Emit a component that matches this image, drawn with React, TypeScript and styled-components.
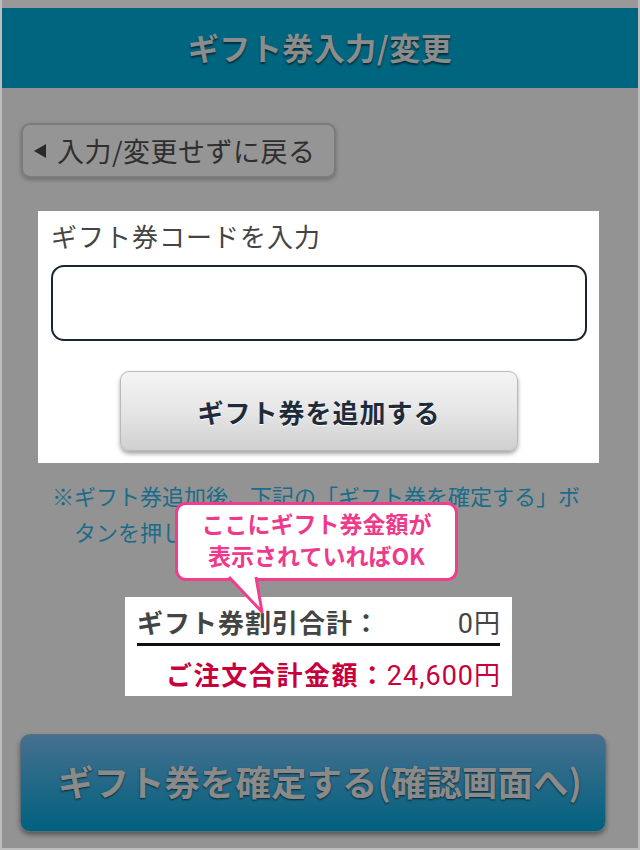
import React from "react";
import styled, { createGlobalStyle } from "styled-components";

const GlobalStyle = createGlobalStyle`
  html, body {
    margin: 0;
    padding: 0;
    background: #bdbdbd;
  }
  body {
    font-family: "Noto Sans CJK JP", "Noto Sans", sans-serif;
  }
  * { box-sizing: border-box; }
`;

const Frame = styled.div`
  width: 636px;
  height: 848px;
  margin: 0 2px;
  background: #939393;
  display: flex;
  flex-direction: column;
  overflow: hidden;
`;

const TopStrip = styled.div`
  height: 8px;
  background: #999999;
  flex: none;
`;

const Header = styled.header`
  height: 80px;
  flex: none;
  background: #00657f;
  display: flex;
  align-items: center;
  justify-content: center;
  padding-bottom: 4px;
`;

const Title = styled.h1`
  margin: 0;
  font-size: 31px;
  font-weight: 700;
  color: #8c8c8c;
  text-shadow: 0 2px 2px rgba(0, 0, 0, 0.55);
  letter-spacing: 0.5px;
`;

const BackButton = styled.button`
  align-self: flex-start;
  margin: 35px 0 0 19px;
  height: 55px;
  padding: 0 18px 0 11px;
  display: flex;
  align-items: center;
  gap: 11px;
  background: #959595;
  border: 2px solid #7b7b7b;
  border-radius: 9px;
  box-shadow: 0 2px 4px rgba(0, 0, 0, 0.25);
  font-family: inherit;
  font-size: 27px;
  letter-spacing: 0.5px;
  color: #2f2f2f;
  cursor: pointer;
`;

const Arrow = styled.span`
  width: 0;
  height: 0;
  border-top: 7px solid transparent;
  border-bottom: 7px solid transparent;
  border-right: 12px solid #2a2a2a;
`;

const InputPanel = styled.section`
  margin: 33px 0 0 36px;
  width: 561px;
  background: #ffffff;
  padding: 6px 12px 12px 13px;
  display: flex;
  flex-direction: column;
`;

const Label = styled.label`
  font-size: 26px;
  line-height: 38px;
  letter-spacing: 1px;
  color: #444444;
`;

const CodeInput = styled.input`
  margin-top: 10px;
  height: 76px;
  width: 100%;
  border: 2px solid #1b2533;
  border-radius: 13px;
  background: #fff;
  font-size: 26px;
  padding: 0 14px;
  outline: none;
`;

const AddButton = styled.button`
  align-self: center;
  margin-top: 30px;
  width: 398px;
  height: 80px;
  border: 1px solid #b9b9b9;
  border-radius: 9px;
  background: linear-gradient(#f4f4f4, #e6e6e6 50%, #d0d0d0);
  box-shadow: 0 3px 4px rgba(0, 0, 0, 0.35);
  font-family: inherit;
  font-size: 26px;
  font-weight: 700;
  letter-spacing: 1px;
  color: #1e2b3b;
  text-shadow: 0 1px 0 #ffffff;
  cursor: pointer;
`;

const Summary = styled.section`
  position: relative;
  display: flex;
  flex-direction: column;
`;

const Note = styled.p`
  margin: 14px 0 0 72px;
  width: 518px;
  text-indent: -22px;
  font-size: 22px;
  line-height: 36px;
  color: #1a6c89;
`;

const Totals = styled.div`
  margin: 48px 0 0 123px;
  width: 387px;
  background: #ffffff;
  padding: 6px 12px 4px 12px;
`;

const Row = styled.div<{ $accent?: boolean }>`
  display: flex;
  justify-content: ${(p) => (p.$accent ? "flex-end" : "space-between")};
  align-items: center;
  height: 36px;
  font-size: 26px;
  color: ${(p) => (p.$accent ? "#c8003c" : "#444444")};
`;

const RowLabel = styled.span<{ $wide?: boolean }>`
  font-weight: 700;
  letter-spacing: ${(p) => (p.$wide ? "1.6px" : "1px")};
`;

const Amount = styled.span`
  font-family: "Roboto", "Noto Sans CJK JP", sans-serif;
  font-size: 27px;
  font-weight: 400;
  letter-spacing: 1px;
`;

const Yen = styled.span`
  font-family: "Noto Sans CJK JP", sans-serif;
  font-size: 26px;
  letter-spacing: 0;
`;

const Rule = styled.hr`
  margin: 4px 0 10px;
  border: 0;
  height: 2.5px;
  background: #111111;
`;

const Bubble = styled.div`
  position: absolute;
  left: 173px;
  top: 39px;
  width: 283px;
  height: 79px;
  background: #ffffff;
  border: 3px solid #f23d8e;
  border-radius: 11px;
  padding: 2px 0 0;
  text-align: center;
  font-size: 23px;
  font-weight: 700;
  line-height: 32px;
  color: #ef3a8b;
`;

const Tail = styled.svg`
  position: absolute;
  left: 44px;
  top: 71px;
  overflow: visible;
`;

const ConfirmButton = styled.button`
  margin: 38px 0 0 18px;
  width: 586px;
  height: 98px;
  border: 1px solid #5d6d78;
  border-radius: 10px;
  background: linear-gradient(#46708f, #00617f);
  box-shadow: 0 3px 5px rgba(0, 0, 0, 0.4);
  font-family: inherit;
  font-size: 35.5px;
  font-weight: 700;
  color: #8a8a8a;
  text-shadow: 0 1px 2px rgba(0, 0, 0, 0.65);
  padding: 0 0 4px 14px;
  cursor: pointer;
`;

export default function App() {
  return (
    <>
      <GlobalStyle />
      <Frame>
        <TopStrip />
        <Header>
          <Title>ギフト券入力/変更</Title>
        </Header>
        <BackButton>
          <Arrow />
          入力/変更せずに戻る
        </BackButton>
        <InputPanel>
          <Label htmlFor="code">ギフト券コードを入力</Label>
          <CodeInput id="code" type="text" />
          <AddButton>ギフト券を追加する</AddButton>
        </InputPanel>
        <Summary>
          <Note>
            ※ギフト券追加後、下記の「ギフト券を確定する」ボタンを押してください。
          </Note>
          <Totals>
            <Row>
              <RowLabel>ギフト券割引合計：</RowLabel>
              <Amount>
                0<Yen>円</Yen>
              </Amount>
            </Row>
            <Rule />
            <Row $accent>
              <RowLabel $wide>ご注文合計金額：</RowLabel>
              <Amount>
                24,600<Yen>円</Yen>
              </Amount>
            </Row>
          </Totals>
          <Bubble>
            ここにギフト券金額が
            <br />
            表示されていればOK
            <Tail width="45" height="40" viewBox="0 0 45 40">
              <polygon points="7,0 34,0 40,36" fill="#ffffff" />
              <polyline
                points="7,1 40,36 34,1"
                fill="none"
                stroke="#f23d8e"
                strokeWidth="3"
                strokeLinejoin="round"
              />
            </Tail>
          </Bubble>
        </Summary>
        <ConfirmButton>ギフト券を確定する(確認画面へ)</ConfirmButton>
      </Frame>
    </>
  );
}
